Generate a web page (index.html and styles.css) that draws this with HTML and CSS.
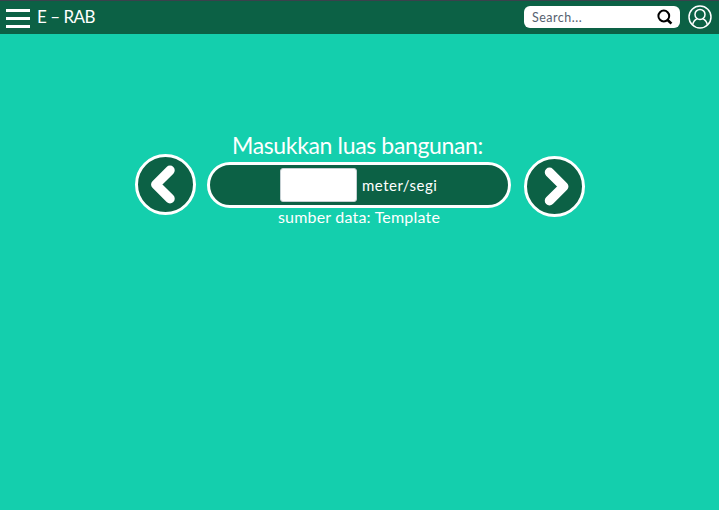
FILE: index.html
```
<!DOCTYPE html>
<html lang="id">
<head>
<meta charset="utf-8">
<title>E – RAB</title>
<link rel="stylesheet" href="styles.css">
</head>
<body>
<header class="topbar">
  <button class="menu" aria-label="Menu"><span></span><span></span><span></span></button>
  <div class="brand">E – RAB</div>
  <div class="search">
    <span class="search-text">Search...</span>
    <svg class="search-icon" width="16" height="16" viewBox="0 0 16 16" fill="none" stroke="#000" stroke-width="2"><circle cx="6.8" cy="7" r="5.4"/><path d="M10.4 10.8 L14.4 14.6" stroke-width="2.6"/></svg>
  </div>
  <svg class="user" width="24" height="24" viewBox="0 0 24 24" fill="none" stroke="#fff" stroke-width="1.5"><circle cx="12" cy="12" r="11"/><circle cx="12" cy="9.4" r="5"/><path d="M4.6 19.8 C5.2 16.8 7 14.6 9.4 13.6 M14.6 13.6 C17 14.6 18.8 16.8 19.4 19.8"/></svg>
</header>
<main class="stage">
  <button class="round prev" aria-label="Kembali"><svg width="61" height="61" viewBox="0 0 61 61"><path d="M35 16.3 L20.8 30.5 L35 44.7"/></svg></button>
  <section class="form">
    <h1 class="title"><span>Masukkan luas bangunan:</span></h1>
    <div class="pill">
      <div class="field"></div>
      <span class="unit">meter/segi</span>
    </div>
    <p class="source"><span>sumber data: Template</span></p>
  </section>
  <button class="round next" aria-label="Lanjut"><svg width="61" height="61" viewBox="0 0 61 61"><path d="M25.5 16.3 L39.7 30.5 L25.5 44.7"/></svg></button>
</main>
</body>
</html>
```
FILE: styles.css
```
* { box-sizing: border-box; }
body {
  margin: 0;
  height: 510px;
  overflow: hidden;
  background: #14cfad;
  color: #fff;
  font-family: Lato, "Liberation Sans", sans-serif;
}
button { padding: 0; border: 0; background: none; }
svg { display: block; }
.topbar {
  display: flex;
  align-items: center;
  height: 34px;
  padding: 0 7px 2px 6px;
  background: #0c6145;
  border-top: 1px solid #3b414c;
}
.menu { display: flex; flex-direction: column; gap: 5px; width: 24px; margin-top: 3px; }
.menu span { height: 3px; background: #fff; }
.brand { margin-left: 7px; font-size: 17px; line-height: 20px; letter-spacing: -0.5px; white-space: nowrap; }
.search {
  display: flex;
  align-items: center;
  justify-content: space-between;
  width: 156px;
  height: 22px;
  margin-left: auto;
  padding: 0 7px 0 8px;
  border-radius: 6px;
  background: #fff;
}
.search-text { padding-top: 1px; font-size: 12.5px; letter-spacing: 0.5px; color: #566270; }
.user { margin-left: 8px; }
.stage { display: flex; justify-content: center; align-items: flex-start; padding: 98px 0 0 1px; }
.round {
  flex: none;
  width: 61px;
  height: 61px;
  border: 3px solid #fff;
  border-radius: 50%;
  background: #0c6145;
}
.round svg { margin: -3px; fill: none; stroke: #fff; stroke-width: 9.5; stroke-linecap: round; stroke-linejoin: round; }
.prev { margin: 22px 11px 0 0; }
.next { margin: 24px 0 0 13px; }
.form { width: 304px; }
.title {
  display: flex;
  justify-content: center;
  margin: 0;
  padding-right: 3px;
  height: 30px;
  font-size: 23px;
  font-weight: 400;
  line-height: 27px;
  letter-spacing: -0.35px;
  white-space: nowrap;
}
.pill {
  display: flex;
  align-items: center;
  height: 46px;
  padding-left: 70px;
  border: 3px solid #fff;
  border-radius: 23px;
  background: #0c6145;
}
.field { width: 77px; height: 34px; border: 1px solid #c5d0d3; border-radius: 3px; background: #fff; }
.unit { margin-left: 5px; font-size: 15px; letter-spacing: 0.5px; }
.source { display: flex; justify-content: center; margin: 0; font-size: 16px; line-height: 18px; letter-spacing: 0.2px; white-space: nowrap; }
```
